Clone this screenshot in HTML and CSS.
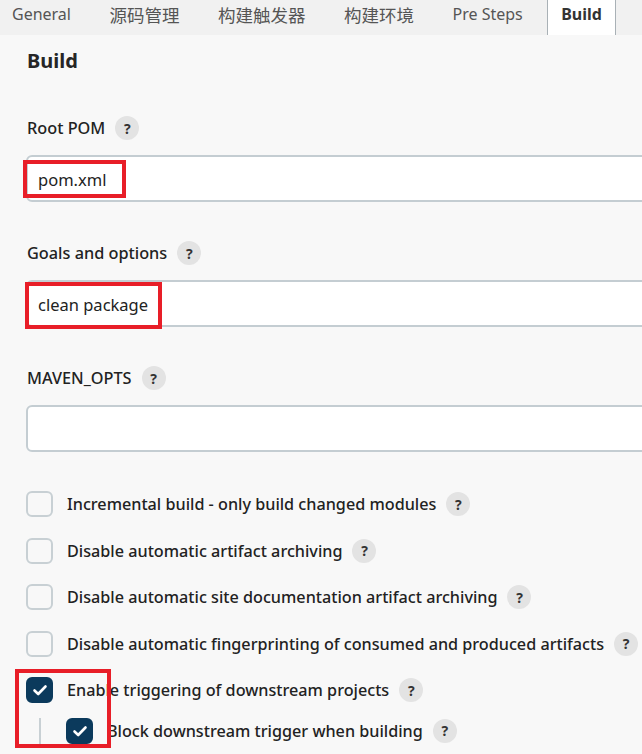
FILE: index.html
```html
<!DOCTYPE html>
<html>
<head>
<meta charset="utf-8">
<link rel="stylesheet" href="styles.css">
</head>
<body>
<nav class="tabs">
  <span class="tab">General</span>
  <span class="tab cjk">源码管理</span>
  <span class="tab cjk">构建触发器</span>
  <span class="tab cjk">构建环境</span>
  <span class="tab">Pre Steps</span>
  <span class="tab active">Build</span>
</nav>
<main class="content">
  <h2 class="heading">Build</h2>

  <div class="label">Root POM <span class="help">?</span></div>
  <div class="input">pom.xml</div>

  <div class="label">Goals and options <span class="help">?</span></div>
  <div class="input">clean package</div>

  <div class="label">MAVEN_OPTS <span class="help">?</span></div>
  <div class="input"></div>

  <div class="checks">
    <div class="check"><span class="box"></span><span class="text">Incremental build - only build changed modules</span><span class="help">?</span></div>
    <div class="check"><span class="box"></span><span class="text">Disable automatic artifact archiving</span><span class="help">?</span></div>
    <div class="check"><span class="box"></span><span class="text">Disable automatic site documentation artifact archiving</span><span class="help">?</span></div>
    <div class="check"><span class="box"></span><span class="text">Disable automatic fingerprinting of consumed and produced artifacts</span><span class="help">?</span></div>
    <div class="check"><span class="box checked"><svg viewBox="0 0 26 26" width="26" height="26"><path d="M7.5 13.5 L11.2 17 L18.5 9.5" fill="none" stroke="#fff" stroke-width="2.6" stroke-linecap="round" stroke-linejoin="round"/></svg></span><span class="text">Enable triggering of downstream projects</span><span class="help">?</span></div>
    <div class="nested">
      <div class="check"><span class="box checked"><svg viewBox="0 0 26 26" width="26" height="26"><path d="M7.5 13.5 L11.2 17 L18.5 9.5" fill="none" stroke="#fff" stroke-width="2.6" stroke-linecap="round" stroke-linejoin="round"/></svg></span><span class="text">Block downstream trigger when building</span><span class="help">?</span></div>
    </div>
  </div>
</main>
<div class="mark mark-pom"></div>
<div class="mark mark-goals"></div>
<div class="mark mark-checks"></div>
</body>
</html>
```

FILE: styles.css
```css
html, body {
  margin: 0;
  padding: 0;
}
body {
  background: #f8f8f8;
  font-family: "Noto Sans", "Open Sans", "Noto Sans CJK SC", sans-serif;
  color: #222;
  overflow: hidden;
  width: 642px;
  height: 754px;
  position: relative;
}
.tabs {
  display: flex;
  height: 35px;
  background: #f1f1f1;
  margin-left: -2px;
  gap: 10.5px;
  white-space: nowrap;
}
.tab {
  display: flex;
  align-items: center;
  padding: 0 14px 7px;
  font-size: 16px;
  color: #555;
  font-family: "Noto Sans", "Noto Sans CJK SC", sans-serif;
}
.tab.cjk {
  font-size: 17.5px;
}
.tab.active {
  background: #fff;
  border-left: 1px solid #a9b1b6;
  border-right: 1px solid #a9b1b6;
  padding: 0 13px 7px;
  font-weight: 700;
  color: #333;
}
.content {
  padding-left: 26px;
}
.heading {
  margin: 12px 0 0 1px;
  font-size: 20px;
  line-height: 28px;
  font-weight: 700;
  color: #262626;
}
.label {
  display: flex;
  align-items: center;
  gap: 10px;
  height: 24px;
  margin: 39px 0 15px 1px;
  font-size: 16.3px;
  font-weight: 500;
}
.heading + .label {
  margin-top: 41px;
}
.help {
  display: inline-flex;
  align-items: center;
  justify-content: center;
  width: 24px;
  height: 24px;
  border-radius: 50%;
  background: #e3e3e3;
  font-size: 14px;
  font-weight: 700;
  color: #333;
  flex: none;
}
.input {
  box-sizing: border-box;
  width: 700px;
  height: 47px;
  border: 2px solid #c4cdd2;
  border-radius: 6px;
  background: #fff;
  padding: 1px 10px 0;
  font-size: 16.5px;
  line-height: 43px;
  color: #222;
}
.checks {
  margin-top: 39px;
  display: flex;
  flex-direction: column;
  gap: 20.5px;
}
.check {
  display: flex;
  align-items: center;
  height: 26px;
  white-space: nowrap;
}
.box {
  box-sizing: border-box;
  width: 27px;
  height: 26px;
  border: 2px solid #c8d0d4;
  border-radius: 6px;
  background: #f8f8f8;
  flex: none;
  margin-right: 14px;
  position: relative;
}
.box.checked {
  background: #0b3a5c;
  border-color: #0b3a5c;
}
.box svg {
  position: absolute;
  left: -1px;
  top: -2px;
}
.text {
  font-size: 16.2px;
  margin-right: 10px;
  font-weight: 500;
}
.nested {
  margin-top: -6px;
  margin-left: 13px;
  border-left: 2px solid #c8d0d4;
  padding-left: 25px;
}
.mark {
  position: absolute;
  border: 4px solid #e81e28;
  box-sizing: border-box;
}
.mark-pom {
  left: 23px;
  top: 160px;
  width: 103px;
  height: 38px;
}
.mark-goals {
  left: 25px;
  top: 282px;
  width: 137px;
  height: 47px;
}
.mark-checks {
  left: 15px;
  top: 669px;
  width: 96px;
  height: 79px;
}
```
